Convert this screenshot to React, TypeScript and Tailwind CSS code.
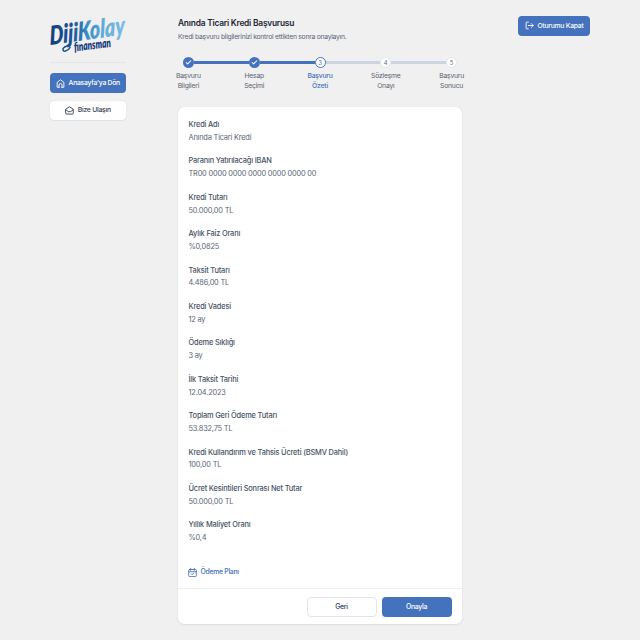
import React from 'react';
import { LuCheck } from 'react-icons/lu';

const details: { label: string; value: string }[] = [
  { label: 'Kredi Adı', value: 'Anında Ticari Kredi' },
  { label: 'Paranın Yatırılacağı IBAN', value: 'TR00 0000 0000 0000 0000 0000 00' },
  { label: 'Kredi Tutarı', value: '50.000,00 TL' },
  { label: 'Aylık Faiz Oranı', value: '%0,0825' },
  { label: 'Taksit Tutarı', value: '4.486,00 TL' },
  { label: 'Kredi Vadesi', value: '12 ay' },
  { label: 'Ödeme Sıklığı', value: '3 ay' },
  { label: 'İlk Taksit Tarihi', value: '12.04.2023' },
  { label: 'Toplam Geri Ödeme Tutarı', value: '53.832,75 TL' },
  { label: 'Kredi Kullandırım ve Tahsis Ücreti (BSMV Dahil)', value: '100,00 TL' },
  { label: 'Ücret Kesintileri Sonrası Net Tutar', value: '50.000,00 TL' },
  { label: 'Yıllık Maliyet Oranı', value: '%0,4' },
];

const steps = [
  { top: 'Başvuru', bottom: 'Bilgileri' },
  { top: 'Hesap', bottom: 'Seçimi' },
  { top: 'Başvuru', bottom: 'Özeti' },
  { top: 'Sözleşme', bottom: 'Onayı' },
  { top: 'Başvuru', bottom: 'Sonucu' },
];

const CURRENT = 2;

function Logo() {
  return (
    <svg viewBox="0 0 77 40" className="h-[40px] w-[77px] overflow-visible">
      <defs>
        <linearGradient id="brand" x1="0" x2="1" y1="0" y2="0">
          <stop offset="0" stopColor="#123f7d" />
          <stop offset="0.3" stopColor="#1c5698" />
          <stop offset="0.5" stopColor="#3c8fc8" />
          <stop offset="0.75" stopColor="#68b0dc" />
          <stop offset="1" stopColor="#7dbce4" />
        </linearGradient>
      </defs>
      <g transform="translate(0 31) rotate(-8) skewX(-6)">
        <text x="0" y="0" fontSize="26" fontWeight="800" fontStyle="italic" textLength="76" lengthAdjust="spacingAndGlyphs" fill="url(#brand)" fontFamily="Lato, sans-serif">
          DijiKolay
        </text>
      </g>
      <path d="M20 33.500c-2 4-7.500 5-7 1.500.5-2 3.500-3 7-4" fill="none" stroke="#1a4f91" strokeWidth="1.500" strokeLinecap="round" />
      <text x="24.5" y="37.5" transform="rotate(-7 24.5 37.500)" fontSize="12.5" fontWeight="800" fontStyle="italic" textLength="37" lengthAdjust="spacingAndGlyphs" fill="#123b78" stroke="#f0f0f0" strokeWidth="1.2" paintOrder="stroke" fontFamily="Lato, sans-serif">
        finansman
      </text>
    </svg>
  );
}

function Icon({ children, className }: { children: React.ReactNode; className: string }) {
  return (
    <svg viewBox="0 0 24 24" fill="none" stroke="currentColor" strokeWidth="2.4" strokeLinecap="round" strokeLinejoin="round" className={`shrink-0 ${className}`}>
      {children}
    </svg>
  );
}

function Stepper() {
  return (
    <div className="mt-[14px] -ml-[22.5px] flex w-[329px]">
      {steps.map((s, i) => (
        <div key={i} className="flex flex-1 flex-col items-center">
          <div className="flex h-[11px] w-full items-center">
            <div className={`h-[3px] flex-1 ${i === 0 ? 'bg-transparent' : i <= CURRENT ? 'bg-[#4472bd]' : 'bg-[#cdd3e1]'}`} />
            <div
              className={`flex size-[11px] shrink-0 items-center justify-center rounded-full text-[6px] leading-none ${
                i < CURRENT
                  ? 'bg-[#4472bd] text-white'
                  : i === CURRENT
                    ? 'border border-[#4472bd] bg-white text-[#4472bd]'
                    : 'border border-[#e5e8ef] bg-white text-[#667085]'
              }`}
            >
              {i < CURRENT ? <LuCheck className="size-[7px]" strokeWidth={3.5} /> : i + 1}
            </div>
            <div className={`h-[3px] flex-1 ${i === 4 ? 'bg-transparent' : i < CURRENT ? 'bg-[#4472bd]' : 'bg-[#cdd3e1]'}`} />
          </div>
          <div className={`mt-[3px] text-center text-[6.8px] leading-[10px] tracking-[-0.22px] ${i === CURRENT ? 'font-medium text-[#4472bd]' : 'text-[#5b6370]'}`}>
            {s.top}
            <br />
            {s.bottom}
          </div>
        </div>
      ))}
    </div>
  );
}

export default function App() {
  return (
    <div className="flex h-[640px] w-[640px] items-start overflow-hidden bg-[#f0f0f0] pl-[50px] font-['Inter',sans-serif] whitespace-nowrap text-[#5a6576]">
      <aside className="w-[75.5px] pt-[14px]">
        <Logo />
        <div className="mt-[8px] border-t border-[#e4e5e8]" />
        <button className="mt-[9.5px] flex h-[20px] w-full items-center justify-center gap-[4px] rounded-[4px] bg-[#4472bd] pt-px text-[6.8px] font-medium tracking-[-0.26px] text-white">
          <Icon className="size-[9px]">
            <path d="M9 22H3V9l9-7 9 7v13h-6" />
            <path d="M8 22v-6a4 4 0 0 1 8 0v6" />
          </Icon>
          Anasayfa'ya Dön
        </button>
        <button className="mt-[8px] flex h-[19px] w-full items-center justify-center gap-[4px] rounded-[4px] bg-white pt-px text-[6.8px] font-medium tracking-[-0.24px] text-[#344054] shadow-[0_0_1px_#c4c9d2,0_1px_1px_#e2e4e8]">
          <Icon className="size-[9px]">
            <path d="M2 8.500 12 2l10 6.500V20a1.500 1.500 0 0 1-1.500 1.500h-17A1.500 1.500 0 0 1 2 20Z" />
            <path d="m2 10 7 5h6l7-5" />
          </Icon>
          Bize Ulaşın
        </button>
      </aside>

      <main className="ml-[52.5px] w-[284px] pt-[17px]">
        <h1 className="text-[8.4px] leading-[12px] font-semibold tracking-[-0.22px] text-[#1d2635]">Anında Ticari Kredi Başvurusu</h1>
        <p className="mt-[2px] text-[6.8px] leading-[12px] tracking-[-0.27px]">Kredi başvuru bilgilerinizi kontrol ettikten sonra onaylayın.</p>
        <Stepper />
        <section className="mt-[16px] flex h-[517px] flex-col rounded-[6px] bg-white shadow-[0_0_1px_#cfd2d8,0_1px_2px_#dddfe3]">
          <dl className="flex flex-col gap-[10.8px] px-[10.5px] pt-[12px]">
            {details.map((d) => (
              <div key={d.label} className="h-[25.6px] text-[7.4px] leading-[12.8px]">
                <dt className="font-medium tracking-[-0.16px] text-[#465264]">{d.label}</dt>
                <dd className="tracking-[-0.19px]">{d.value}</dd>
              </div>
            ))}
          </dl>
          <a className="mt-[21px] ml-[10px] flex h-[13px] items-center gap-[3.5px] text-[6.9px] font-medium tracking-[-0.3px] text-[#4472bd]">
            <Icon className="size-[9px]">
              <rect x="2" y="4" width="20" height="19" rx="2" />
              <path d="M7 1v5M17 1v5M2 10h20M9 16l2 2 4-4" />
            </Icon>
            Ödeme Planı
          </a>
          <footer className="mt-auto flex h-[36px] items-center justify-end gap-[5px] border-t border-[#eceef1] pr-[10.5px]">
            <button className="h-[20px] w-[70px] rounded-[4px] border border-[#e3e5ea] pt-px text-[6.9px] font-medium tracking-[-0.3px] text-[#344054]">Geri</button>
            <button className="h-[20px] w-[70px] rounded-[4px] bg-[#4472bd] pt-px text-[6.9px] font-medium tracking-[-0.3px] text-white">Onayla</button>
          </footer>
        </section>
      </main>

      <button className="mt-[16px] ml-[56px] flex h-[19.5px] w-[72px] items-center justify-center gap-[4px] rounded-[4px] bg-[#4472bd] text-[6.8px] font-medium tracking-[-0.25px] text-white">
        <Icon className="size-[9px]">
          <path d="M9 3H5a2 2 0 0 0-2 2v14a2 2 0 0 0 2 2h4M9 12h13M17 7l5 5-5 5" />
        </Icon>
        Oturumu Kapat
      </button>
    </div>
  );
}
